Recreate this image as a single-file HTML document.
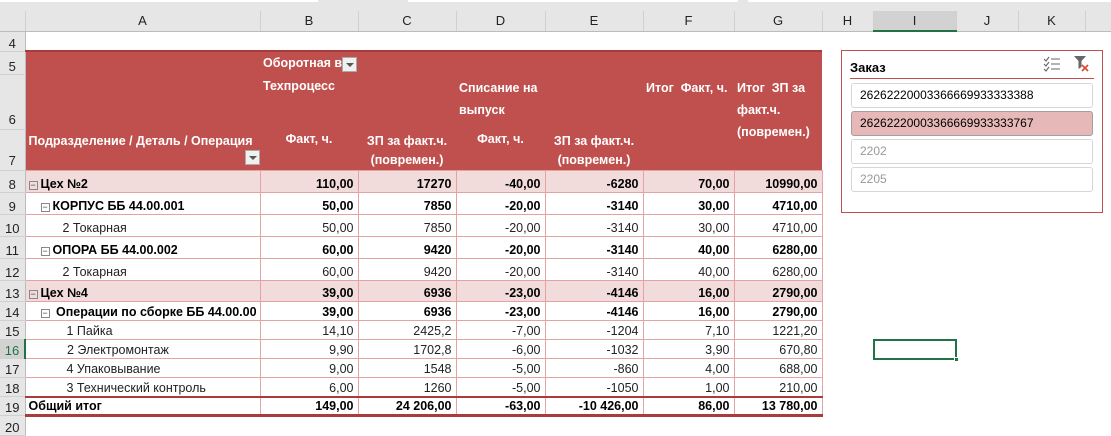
<!DOCTYPE html>
<html><head><meta charset="utf-8"><style>
*{margin:0;padding:0;box-sizing:border-box}
body{width:1111px;height:431px;overflow:hidden;background:#fff;font-family:"Liberation Sans",sans-serif;font-size:12.5px;position:relative;color:#000}
#top{position:absolute;left:0;top:0;width:1111px;height:11px;background:#e6e6e6}
#top div{position:absolute;top:0;height:2px;background:#fff}
table{position:absolute;left:0;top:11px;border-collapse:collapse;table-layout:fixed;width:1111px}
td{padding:0 3px;white-space:nowrap;overflow:hidden;vertical-align:bottom;line-height:15px}
.rh{background:#e6e6e6;color:#222;text-align:center;border-right:1px solid #bcbcbc;border-bottom:1px solid #d0d0d0;padding:0;font-size:13px}
.ch td{background:#e6e6e6;text-align:center;border-right:1px solid #d0d0d0;border-bottom:1px solid #bcbcbc;vertical-align:middle;font-size:13px;color:#222}
.hd{background:#c0504d;color:#fff;font-weight:bold;vertical-align:top}
.p td.c{border:1px solid #e3a3a2;text-align:right;padding-right:4px}
.p td.c.l{text-align:left}
.b td.c{font-weight:bold;background:#f2dcdb}
.s td.c{font-weight:bold}
.n td.c{color:#222}
.tot td.c{font-weight:bold;border-top:2px solid #a83c3a;border-bottom:3px solid #a83c3a;border-left:1px solid #e3a3a2;border-right:1px solid #e3a3a2}
.m{display:inline-block;width:9px;height:9px;border:1px solid #888;font-size:9px;line-height:6px;text-align:center;color:#444;margin-right:3px;vertical-align:0;font-weight:normal}
.dd{display:inline-block;width:15px;height:15px;background:#f0f0f0;border:1px solid #aaa;position:relative;vertical-align:middle}
.dd:after{content:"";position:absolute;left:3px;top:5px;border-left:4px solid transparent;border-right:4px solid transparent;border-top:4px solid #555}
#sl{position:absolute;left:841px;top:50px;width:262px;height:163px;border:1px solid #c0504d;background:#fff}
#sl .t{position:absolute;left:8px;top:9px;font-weight:bold;font-size:13px}
#sl .ln{position:absolute;left:8px;right:8px;top:27px;border-top:1px solid #c0504d}
.it{position:absolute;left:9px;width:242px;height:25px;border:1px solid #d6d6d6;border-radius:3px;padding-left:8px;line-height:23px;font-size:12px;overflow:hidden;white-space:nowrap}
#sel{position:absolute;left:873px;top:339px;width:84px;height:21px;border:2px solid #217346}
</style></head><body>
<div id="top"><div style="left:0;width:318px"></div><div style="left:408px;width:330px"></div><div style="left:748px;width:363px"></div></div>
<table>
<colgroup><col style="width:25px"><col style="width:235px"><col style="width:98px"><col style="width:98px"><col style="width:89px"><col style="width:98px"><col style="width:91px"><col style="width:88px"><col style="width:51px"><col style="width:83px"><col style="width:62px"><col style="width:67px"><col style="width:26px"></colgroup>
<tr class="ch" style="height:20px"><td style="background:#e6e6e6"></td><td>A</td><td>B</td><td>C</td><td>D</td><td>E</td><td>F</td><td>G</td><td>H</td><td style="background:#d2d2d2;border-bottom:2px solid #217346">I</td><td>J</td><td>K</td><td></td></tr>
<tr style="height:20px"><td class="rh">4</td><td colspan="12"></td></tr>
<tr style="height:23px"><td class="rh">5</td><td class="hd" style="border-top:2px solid #a83c3a"></td><td class="hd" style="border-top:2px solid #a83c3a;vertical-align:middle;padding-top:2px">Оборотная в<span class="dd"></span></td><td class="hd" colspan="5" style="border-top:2px solid #a83c3a"></td><td colspan="5"></td></tr>
<tr style="height:55px"><td class="rh" style="vertical-align:bottom;padding-bottom:2px">6</td><td class="hd"></td><td class="hd" style="padding-top:5px">Техпроцесс</td><td class="hd"></td><td class="hd" style="padding-top:3px;line-height:22px;white-space:normal">Списание на выпуск</td><td class="hd"></td><td class="hd" style="padding-top:3px;line-height:22px;white-space:normal">Итог&nbsp; Факт, ч.</td><td class="hd" style="padding-top:3px;line-height:22px" rowspan="2">Итог&nbsp; ЗП за<br>факт.ч.<br>(повремен.)</td><td colspan="5"></td></tr>
<tr style="height:38px"><td class="rh" style="vertical-align:bottom;padding-bottom:2px">7</td><td class="hd" style="vertical-align:middle;padding-right:0">Подразделение / Деталь / Операция<div style="text-align:right;margin-top:1px"><span class="dd"></span></div></td><td class="hd" style="text-align:center;padding-top:3px">Факт, ч.</td><td class="hd" style="text-align:center;padding-top:3px;line-height:19px">ЗП за факт.ч.<br>(повремен.)</td><td class="hd" style="text-align:center;padding-top:3px">Факт, ч.</td><td class="hd" style="text-align:center;padding-top:3px;line-height:19px">ЗП за факт.ч.<br>(повремен.)</td><td class="hd"></td><td colspan="5"></td></tr>
<tr class="p b" style="height:22px"><td class="rh">8</td><td class="c l"><span class="m">−</span>Цех №2</td><td class="c">110,00</td><td class="c">17270</td><td class="c">-40,00</td><td class="c">-6280</td><td class="c">70,00</td><td class="c">10990,00</td><td colspan="5"></td></tr>
<tr class="p s" style="height:22px"><td class="rh">9</td><td class="c l" style="padding-left:15px"><span class="m">−</span>КОРПУС ББ 44.00.001</td><td class="c">50,00</td><td class="c">7850</td><td class="c">-20,00</td><td class="c">-3140</td><td class="c">30,00</td><td class="c">4710,00</td><td colspan="5"></td></tr>
<tr class="p n" style="height:22px"><td class="rh">10</td><td class="c l" style="padding-left:37px">2 Токарная</td><td class="c">50,00</td><td class="c">7850</td><td class="c">-20,00</td><td class="c">-3140</td><td class="c">30,00</td><td class="c">4710,00</td><td colspan="5"></td></tr>
<tr class="p s" style="height:22px"><td class="rh">11</td><td class="c l" style="padding-left:15px"><span class="m">−</span>ОПОРА ББ 44.00.002</td><td class="c">60,00</td><td class="c">9420</td><td class="c">-20,00</td><td class="c">-3140</td><td class="c">40,00</td><td class="c">6280,00</td><td colspan="5"></td></tr>
<tr class="p n" style="height:22px"><td class="rh">12</td><td class="c l" style="padding-left:37px">2 Токарная</td><td class="c">60,00</td><td class="c">9420</td><td class="c">-20,00</td><td class="c">-3140</td><td class="c">40,00</td><td class="c">6280,00</td><td colspan="5"></td></tr>
<tr class="p b" style="height:21px"><td class="rh">13</td><td class="c l"><span class="m">−</span>Цех №4</td><td class="c">39,00</td><td class="c">6936</td><td class="c">-23,00</td><td class="c">-4146</td><td class="c">16,00</td><td class="c">2790,00</td><td colspan="5"></td></tr>
<tr class="p s" style="height:19px"><td class="rh">14</td><td class="c l" style="padding-left:15px"><span class="m">−</span>&nbsp;Операции по сборке ББ 44.00.00</td><td class="c">39,00</td><td class="c">6936</td><td class="c">-23,00</td><td class="c">-4146</td><td class="c">16,00</td><td class="c">2790,00</td><td colspan="5"></td></tr>
<tr class="p n" style="height:19px"><td class="rh">15</td><td class="c l" style="padding-left:41px">1 Пайка</td><td class="c">14,10</td><td class="c">2425,2</td><td class="c">-7,00</td><td class="c">-1204</td><td class="c">7,10</td><td class="c">1221,20</td><td colspan="5"></td></tr>
<tr class="p n" style="height:19px"><td class="rh" style="background:#d2d2d2;color:#217346;border-right:2px solid #217346">16</td><td class="c l" style="padding-left:41px">2 Электромонтаж</td><td class="c">9,90</td><td class="c">1702,8</td><td class="c">-6,00</td><td class="c">-1032</td><td class="c">3,90</td><td class="c">670,80</td><td colspan="5"></td></tr>
<tr class="p n" style="height:19px"><td class="rh">17</td><td class="c l" style="padding-left:41px">4 Упаковывание</td><td class="c">9,00</td><td class="c">1548</td><td class="c">-5,00</td><td class="c">-860</td><td class="c">4,00</td><td class="c">688,00</td><td colspan="5"></td></tr>
<tr class="p n" style="height:19px"><td class="rh">18</td><td class="c l" style="padding-left:41px">3 Технический контроль</td><td class="c">6,00</td><td class="c">1260</td><td class="c">-5,00</td><td class="c">-1050</td><td class="c">1,00</td><td class="c">210,00</td><td colspan="5"></td></tr>
<tr class="p tot" style="height:19px"><td class="rh">19</td><td class="c l">Общий итог</td><td class="c">149,00</td><td class="c">24 206,00</td><td class="c">-63,00</td><td class="c">-10 426,00</td><td class="c">86,00</td><td class="c">13 780,00</td><td colspan="5"></td></tr>
<tr style="height:20px"><td class="rh">20</td><td colspan="12"></td></tr>
</table>
<div id="sl">
<div class="t">Заказ</div>
<svg style="position:absolute;left:201px;top:5px" width="18" height="17" viewBox="0 0 18 17" fill="none" stroke="#666" stroke-width="1.1"><path d="M1 3l2 2 3-4M1 8l2 2 3-4M1 13l2 2 3-4M8 3h9M8 8h9M8 13h9"/></svg>
<svg style="position:absolute;left:231px;top:4px" width="18" height="18" viewBox="0 0 18 18"><path d="M1 1h12l-4.5 5v6l-3 2v-8z" fill="#666"/><path d="M9 10l6 6M15 10l-6 6" stroke="#e0442b" stroke-width="1.6"/></svg>
<div class="ln"></div>
<div class="it" style="top:32px">26262220003366669933333388</div>
<div class="it" style="top:60px;background:#e6b8b7;border-color:#a0a0a0">26262220003366669933333767</div>
<div class="it" style="top:88px;color:#999">2202</div>
<div class="it" style="top:116px;color:#999">2205</div>
</div>
<div id="sel"><div style="position:absolute;right:-4px;bottom:-4px;width:5px;height:5px;background:#217346;border:1px solid #fff"></div></div>
</body></html>
